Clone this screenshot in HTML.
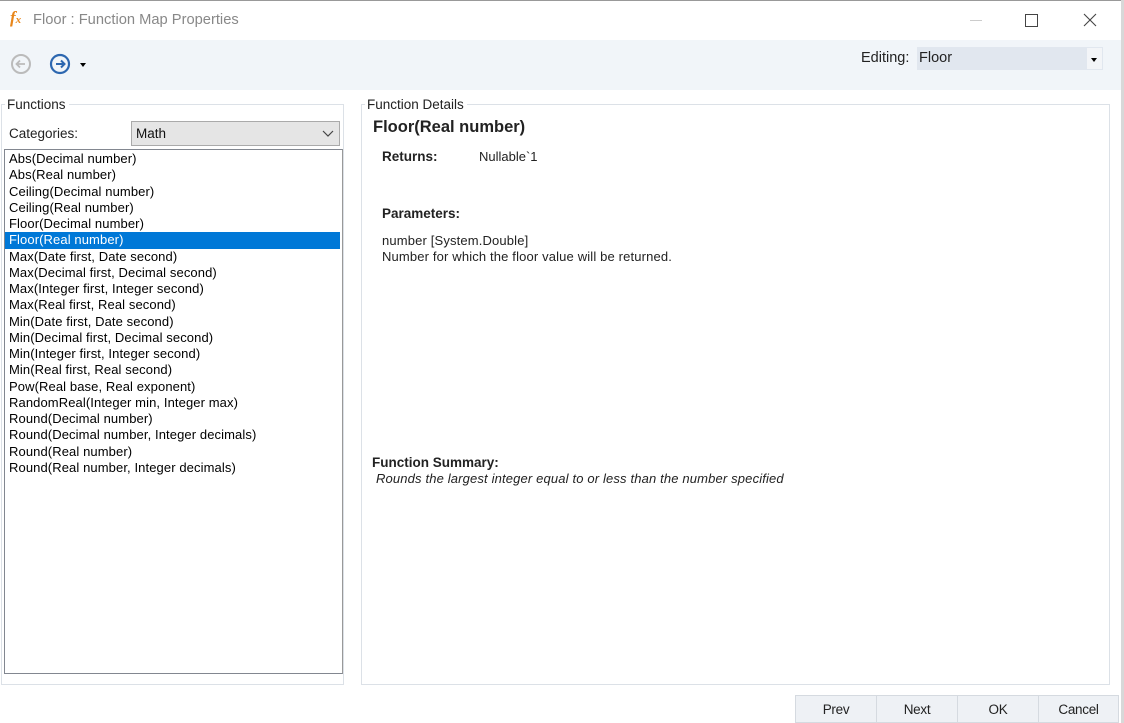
<!DOCTYPE html>
<html><head><style>
body{margin:0;width:1124px;height:723px;background:#fff;position:relative;overflow:hidden;font-family:"Liberation Sans",sans-serif;color:#000}
.a{position:absolute}
.t{font-size:13px;white-space:nowrap}
.list div{height:16.25px;line-height:16px;font-size:13px;padding-left:4px;letter-spacing:0.1px}
.btn{position:absolute;top:695px;height:28px;background:#eef1f5;border:1px solid #d5dae0;box-sizing:border-box;text-align:center;line-height:27px;font-size:13.5px;color:#222;letter-spacing:-0.3px}
</style></head><body>
<div class="a" style="left:0;top:0;width:1124px;height:1px;background:#999"></div>
<div class="a" style="left:1121px;top:0;width:3px;height:723px;background:#d8d8d8"></div>
<div class="a" style="left:10px;top:8px;font:italic bold 17px 'Liberation Serif',serif;color:#e8861a">f<span style="font-size:11px">x</span></div>
<div class="a t" style="left:33px;top:12px;font-size:14.7px;color:#888">Floor : Function Map Properties</div>
<div class="a" style="left:970px;top:20px;width:12px;height:1px;background:#ccc"></div>
<div class="a" style="left:1025px;top:14px;width:11px;height:11px;border:1px solid #444"></div>
<svg class="a" style="left:1083px;top:13px" width="14" height="14"><path d="M1 1L13 13M13 1L1 13" stroke="#444" stroke-width="1.1"/></svg>
<div class="a" style="left:0;top:40px;width:1121px;height:50px;background:#f1f5f9"></div>
<svg class="a" style="left:10px;top:53px" width="22" height="22"><circle cx="11" cy="11" r="9" fill="none" stroke="#bbb" stroke-width="2"/><path d="M15 11H7M10 7.5L6.5 11L10 14.5" fill="none" stroke="#bbb" stroke-width="1.8"/></svg>
<svg class="a" style="left:49px;top:53px" width="22" height="22"><circle cx="11" cy="11" r="9" fill="none" stroke="#2d67b0" stroke-width="2.2"/><path d="M7 11H15M12 7.5L15.5 11L12 14.5" fill="none" stroke="#2d67b0" stroke-width="2"/></svg>
<div class="a" style="left:80px;top:63px;border-left:3.5px solid transparent;border-right:3.5px solid transparent;border-top:4px solid #000"></div>
<div class="a t" style="left:861px;top:50px;font-size:14.5px;color:#222">Editing:</div>
<div class="a" style="left:917px;top:47px;width:186px;height:23px;background:#e1e7ef"></div>
<div class="a t" style="left:919px;top:50px;font-size:14.5px;color:#222">Floor</div>
<div class="a" style="left:1087px;top:48px;width:15px;height:21px;background:#f3f5f8"></div>
<div class="a" style="left:1091px;top:58px;border-left:3.5px solid transparent;border-right:3.5px solid transparent;border-top:4px solid #000"></div>

<div class="a" style="left:1px;top:104px;width:343px;height:581px;border:1px solid #dce1e7;box-sizing:border-box"></div>
<div class="a t" style="left:5px;top:97px;background:#fff;padding:0 3px 0 2px;font-size:13.5px;color:#222">Functions</div>
<div class="a t" style="left:9px;top:126px;font-size:13.5px;color:#222">Categories:</div>
<div class="a" style="left:131px;top:121px;width:209px;height:25px;background:#e5e5e5;border:1px solid #aaa;box-sizing:border-box"></div>
<div class="a t" style="left:136px;top:126px;font-size:13.5px;color:#111">Math</div>
<svg class="a" style="left:322px;top:130px" width="12" height="8"><path d="M1 1L6 6L11 1" fill="none" stroke="#444" stroke-width="1.2"/></svg>
<div class="a" style="left:4px;top:149px;width:339px;height:525px;border:1px solid #828790;border-right-color:#999;box-sizing:border-box"></div>
<div class="a list" style="left:5px;top:151px;width:335px">
<div>Abs(Decimal number)</div><div>Abs(Real number)</div><div>Ceiling(Decimal number)</div><div>Ceiling(Real number)</div><div>Floor(Decimal number)</div><div style="background:#0078d7;color:#fff">Floor(Real number)</div><div>Max(Date first, Date second)</div><div>Max(Decimal first, Decimal second)</div><div>Max(Integer first, Integer second)</div><div>Max(Real first, Real second)</div><div>Min(Date first, Date second)</div><div>Min(Decimal first, Decimal second)</div><div>Min(Integer first, Integer second)</div><div>Min(Real first, Real second)</div><div>Pow(Real base, Real exponent)</div><div>RandomReal(Integer min, Integer max)</div><div>Round(Decimal number)</div><div>Round(Decimal number, Integer decimals)</div><div>Round(Real number)</div><div>Round(Real number, Integer decimals)</div>
</div>

<div class="a" style="left:361px;top:104px;width:749px;height:581px;border:1px solid #dce1e7;box-sizing:border-box"></div>
<div class="a t" style="left:365px;top:97px;background:#fff;padding:0 3px 0 2px;font-size:13.5px;color:#222">Function Details</div>
<div class="a t" style="left:373px;top:118px;font-size:16.5px;font-weight:bold;color:#222">Floor(Real number)</div>
<div class="a t" style="left:382px;top:149px;font-weight:bold;color:#222;font-size:13.5px">Returns:</div>
<div class="a t" style="left:479px;top:149px;color:#222">Nullable`1</div>
<div class="a t" style="left:382px;top:206px;font-weight:bold;color:#222;font-size:13.5px">Parameters:</div>
<div class="a t" style="left:382px;top:233px;font-size:13px;letter-spacing:0.15px;color:#222">number [System.Double]</div>
<div class="a t" style="left:382px;top:249px;font-size:13px;letter-spacing:0.15px;color:#222">Number for which the floor value will be returned.</div>
<div class="a t" style="left:372px;top:455px;font-weight:bold;color:#222;font-size:13.5px">Function Summary:</div>
<div class="a t" style="left:376px;top:471px;font-size:13px;font-style:italic;letter-spacing:0.15px;color:#222">Rounds the largest integer equal to or less than the number specified</div>

<div class="btn" style="left:795px;width:82px">Prev</div>
<div class="btn" style="left:876px;width:82px">Next</div>
<div class="btn" style="left:957px;width:82px">OK</div>
<div class="btn" style="left:1038px;width:81px">Cancel</div>
</body></html>
